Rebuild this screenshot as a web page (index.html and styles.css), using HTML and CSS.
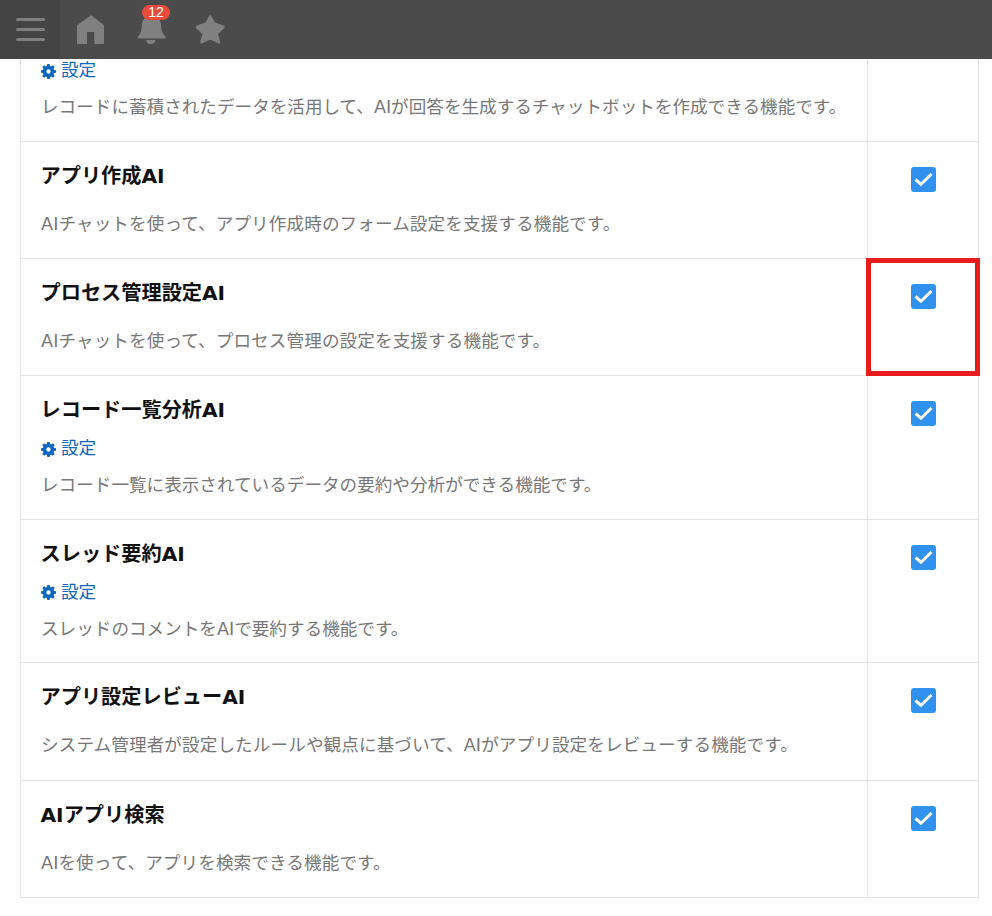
FILE: index.html
```html
<!DOCTYPE html>
<html lang="ja">
<head>
<meta charset="utf-8">
<title>AI機能</title>
<link rel="stylesheet" href="styles.css">
</head>
<body>
<header class="topbar">
  <button class="menu" aria-label="menu">
    <span class="menu-line"></span><span class="menu-line"></span><span class="menu-line"></span>
  </button>
  <nav class="nav">
    <svg class="nav-icon" viewBox="0 0 30 30"><path d="M14.600.4a.8.8 0 0 1 1 0L28 10.300V28a1 1 0 0 1-1 1H18.300V18a1 1 0 0 0-1-1H12a1 1 0 0 0-1 1V29H2a1 1 0 0 1-1-1V10.300Z"/></svg>
    <span class="bell">
      <svg class="nav-icon" viewBox="0 0 30 30"><path d="M15.500 1C21 1 24.500 4 25 9c.5 6 .5 9 4.500 12.500V23.500H1.800V21.500C5.500 18 5.500 15 6 9 6.500 4 10 1 15.500 1Z"/><path d="M10.200 25h9.200c0 2.500-2 4-4.600 4s-4.600-1.500-4.600-4Z"/></svg>
      <span class="badge">12</span>
    </span>
    <svg class="nav-icon" viewBox="0 0 30 30"><path class="star" d="M15.200 1.500l4 7 9.300 3.500-6.800 6.500 2.300 8.800-8.800-4.100-8.800 4.100 2.300-8.800L1.900 12l9.300-3.500Z"/></svg>
  </nav>
</header>

<main class="table">
  <section class="row row-first">
    <div class="cell-main">
      <a class="setting"><svg class="gear" viewBox="0 0 16 16"><path d="M6.700 0h2.600l.4 2.100 1.200.5 1.800-1.200 1.900 1.900-1.200 1.800.5 1.200 2.100.4v2.600l-2.100.4-.5 1.200 1.200 1.800-1.900 1.900-1.800-1.200-1.200.5-.4 2.100H6.700l-.4-2.100-1.200-.5-1.800 1.200-1.900-1.900 1.200-1.800-.5-1.200L0 9.300V6.700l2.100-.4.500-1.200-1.200-1.800 1.900-1.900 1.800 1.200 1.200-.5ZM8 5.700a2.300 2.300 0 1 0 0 4.600 2.300 2.300 0 0 0 0-4.600Z" fill-rule="evenodd"/></svg>設定</a>
      <p class="desc">レコードに蓄積されたデータを活用して、AIが回答を生成するチャットボットを作成できる機能です。</p>
    </div>
    <div class="cell-check"></div>
  </section>

  <section class="row">
    <div class="cell-main">
      <h2 class="title">アプリ作成AI</h2>
      <p class="desc desc-plain">AIチャットを使って、アプリ作成時のフォーム設定を支援する機能です。</p>
    </div>
    <div class="cell-check"><span class="check"><svg viewBox="0 0 25 25"><path d="M4.500 12.500l5.500 4.800L20.500 7"/></svg></span></div>
  </section>

  <section class="row">
    <div class="cell-main">
      <h2 class="title">プロセス管理設定AI</h2>
      <p class="desc desc-plain">AIチャットを使って、プロセス管理の設定を支援する機能です。</p>
    </div>
    <div class="cell-check"><span class="check"><svg viewBox="0 0 25 25"><path d="M4.500 12.500l5.500 4.800L20.500 7"/></svg></span><span class="highlight"></span></div>
  </section>

  <section class="row row-setting">
    <div class="cell-main">
      <h2 class="title">レコード一覧分析AI</h2>
      <a class="setting"><svg class="gear" viewBox="0 0 16 16"><path d="M6.700 0h2.600l.4 2.100 1.200.5 1.800-1.200 1.900 1.900-1.200 1.800.5 1.200 2.100.4v2.600l-2.100.4-.5 1.200 1.200 1.800-1.900 1.900-1.800-1.200-1.200.5-.4 2.100H6.700l-.4-2.100-1.200-.5-1.800 1.200-1.900-1.900 1.200-1.800-.5-1.200L0 9.300V6.700l2.100-.4.500-1.200-1.200-1.800 1.900-1.900 1.800 1.200 1.200-.5ZM8 5.700a2.300 2.300 0 1 0 0 4.600 2.300 2.300 0 0 0 0-4.600Z" fill-rule="evenodd"/></svg>設定</a>
      <p class="desc">レコード一覧に表示されているデータの要約や分析ができる機能です。</p>
    </div>
    <div class="cell-check"><span class="check"><svg viewBox="0 0 25 25"><path d="M4.500 12.500l5.500 4.800L20.500 7"/></svg></span></div>
  </section>

  <section class="row row-setting">
    <div class="cell-main">
      <h2 class="title">スレッド要約AI</h2>
      <a class="setting"><svg class="gear" viewBox="0 0 16 16"><path d="M6.700 0h2.600l.4 2.100 1.200.5 1.800-1.200 1.900 1.900-1.200 1.800.5 1.200 2.100.4v2.600l-2.100.4-.5 1.200 1.200 1.800-1.900 1.900-1.800-1.200-1.200.5-.4 2.100H6.700l-.4-2.100-1.200-.5-1.800 1.200-1.900-1.900 1.200-1.800-.5-1.200L0 9.300V6.700l2.100-.4.500-1.200-1.200-1.800 1.900-1.900 1.800 1.200 1.200-.5ZM8 5.700a2.300 2.300 0 1 0 0 4.600 2.300 2.300 0 0 0 0-4.600Z" fill-rule="evenodd"/></svg>設定</a>
      <p class="desc">スレッドのコメントをAIで要約する機能です。</p>
    </div>
    <div class="cell-check"><span class="check"><svg viewBox="0 0 25 25"><path d="M4.500 12.500l5.500 4.800L20.500 7"/></svg></span></div>
  </section>

  <section class="row">
    <div class="cell-main">
      <h2 class="title">アプリ設定レビューAI</h2>
      <p class="desc desc-plain">システム管理者が設定したルールや観点に基づいて、AIがアプリ設定をレビューする機能です。</p>
    </div>
    <div class="cell-check"><span class="check"><svg viewBox="0 0 25 25"><path d="M4.500 12.500l5.500 4.800L20.500 7"/></svg></span></div>
  </section>

  <section class="row">
    <div class="cell-main">
      <h2 class="title">AIアプリ検索</h2>
      <p class="desc desc-plain">AIを使って、アプリを検索できる機能です。</p>
    </div>
    <div class="cell-check"><span class="check"><svg viewBox="0 0 25 25"><path d="M4.500 12.500l5.500 4.800L20.500 7"/></svg></span></div>
  </section>
</main>
</body>
</html>
```

FILE: styles.css
```css
* { box-sizing: border-box; }
html, body { margin: 0; padding: 0; background: #fff; }
body {
  font-family: "DejaVu Sans", "Noto Sans CJK JP", sans-serif;
  height: 916px;
  overflow: hidden;
}
.topbar {
  display: flex;
  height: 59px;
  background: #4b4b4b;
}
.menu {
  display: flex;
  flex-direction: column;
  justify-content: center;
  gap: 7px;
  width: 60px;
  padding: 0 15px 0 16px;
  border: 0;
  background: #444;
}
.menu-line {
  display: block;
  height: 3px;
  border-radius: 2px;
  background: #7f7f7f;
}
.nav {
  display: flex;
  align-items: center;
  gap: 29.5px;
  padding: 0 0 0 16px;
}
.nav-icon {
  display: block;
  width: 30px;
  height: 30px;
  fill: #808080;
}
.star { stroke: #808080; stroke-width: 2.500; stroke-linejoin: round; }
.bell { position: relative; display: block; }
.badge {
  position: absolute;
  top: -10px;
  left: 6.5px;
  width: 28px;
  height: 15px;
  border-radius: 8px;
  background: #e74c3c;
  color: #fff;
  font: 14px/15px "Liberation Sans", sans-serif;
  text-align: center;
}
.table {
  margin: 0 13px 0 20px;
  border-left: 1px solid #e3e3e3;
  border-right: 1px solid #e3e3e3;
}
.row {
  display: grid;
  grid-template-columns: 846px 1fr;
  height: 117.25px;
  border-bottom: 1px solid #e3e3e3;
}
.row-setting { height: 143.5px; }
.row-first { height: 82.9px; }
.cell-main { padding: 20px 20px 0; }
.row-first .cell-main { padding-top: 0; }
.cell-check {
  position: relative;
  display: flex;
  justify-content: center;
  padding-top: 25px;
  border-left: 1px solid #e3e3e3;
}
.title {
  margin: 0 0 0 -0.5px;
  height: 28px;
  font-size: 20.2px;
  line-height: 28px;
  font-weight: 700;
  color: #111;
}
.setting {
  display: flex;
  align-items: center;
  gap: 5px;
  height: 24px;
  margin-top: 12px;
  font-size: 17.6px;
  line-height: 24px;
  color: #0b66c3;
}
.row-first .setting { margin-top: -1px; }
.gear { width: 15px; height: 15px; fill: #0b66c3; margin-top: 2px; }
.desc {
  margin: 12px 0 0;
  height: 26px;
  font-size: 17.6px;
  line-height: 26px;
  color: #777;
}
.desc-plain { margin-top: 21px; letter-spacing: .1px; }
.check {
  display: block;
  width: 25px;
  height: 25px;
  border-radius: 3px;
  background: #3091ee;
  margin-left: 1px;
}
.check svg {
  display: block;
  width: 25px;
  height: 25px;
  fill: none;
  stroke: #fff;
  stroke-width: 3;
}
.highlight {
  position: absolute;
  top: -1px;
  left: -2px;
  right: -2px;
  bottom: -1px;
  border: 5px solid #e81c1c;
}
```
